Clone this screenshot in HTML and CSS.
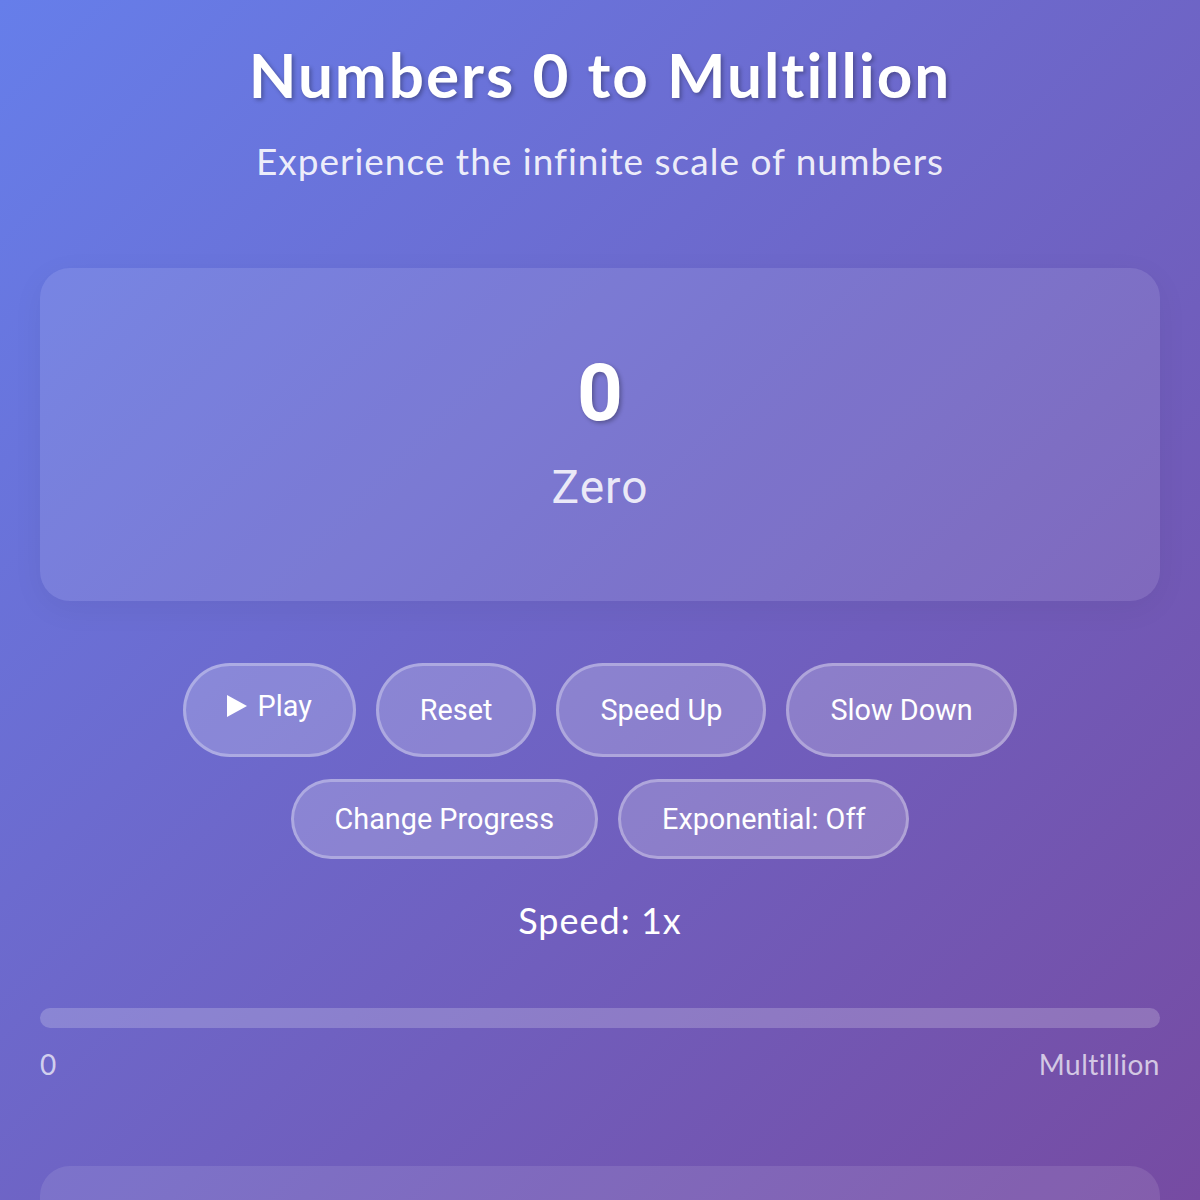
FILE: index.html
```html
<!DOCTYPE html>
<html lang="en">

<head>
    <meta charset="UTF-8">
    <meta name="viewport" content="width=device-width, initial-scale=1.0">
    <title>Numbers 0 to Multillion</title>
    <link rel="stylesheet" href="styles.css">
</head>

<body>
    <div class="container">
        <h1>Numbers 0 to Multillion</h1>
        <p class="subtitle">Experience the infinite scale of numbers</p>

        <div class="number-card">
            <div class="number" id="number">0</div>
            <div class="number-name" id="number-name">Zero</div>
        </div>

        <div class="controls">
            <div class="row">
                <button class="btn btn-play" id="play">
                    <svg class="play-icon" viewBox="0 0 20 22" width="20" height="22">
                        <path d="M0 0 L20 11 L0 22 Z" fill="#fff" />
                    </svg>
                    Play
                </button>
                <button class="btn" id="reset">Reset</button>
                <button class="btn" id="faster">Speed Up</button>
                <button class="btn" id="slower">Slow Down</button>
            </div>
            <div class="row">
                <button class="btn" id="progress-mode">Change Progress</button>
                <button class="btn" id="exponential">Exponential: Off</button>
            </div>
        </div>

        <div class="speed">Speed: <span id="speed">1x</span></div>

        <div class="progress">
            <div class="progress-fill" id="progress-fill"></div>
        </div>
        <div class="progress-labels">
            <span>0</span>
            <span>Multillion</span>
        </div>

        <div class="info-card"></div>
    </div>
</body>

</html>
```

FILE: styles.css
```css
html {
    background: linear-gradient(135deg, #667eea 0%, #764ba2 100%) fixed;
    min-height: 100%;
}

body {
    margin: 0;
    font-family: Lato, 'Open Sans', sans-serif;
    color: #fff;
}

.container {
    padding: 0 40px;
}

h1 {
    margin: 41px 0 0;
    font-size: 62px;
    line-height: 67px;
    font-weight: 700;
    text-align: center;
    letter-spacing: 2px;
    text-shadow: 2px 2px 4px rgba(0, 0, 0, 0.3);
}

.subtitle {
    margin: 34px 0 0;
    font-size: 37px;
    line-height: 38px;
    text-align: center;
    letter-spacing: 1px;
    color: rgba(255, 255, 255, 0.9);
}

.number-card {
    margin-top: 88px;
    height: 333px;
    box-sizing: border-box;
    padding: 77px 20px 0;
    border-radius: 30px;
    background: rgba(255, 255, 255, 0.1);
    box-shadow: 0 8px 32px rgba(0, 0, 0, 0.05);
    text-align: center;
}

.number {
    font-family: Roboto, sans-serif;
    font-weight: 700;
    font-size: 80px;
    line-height: 96px;
    text-shadow: 2px 2px 4px rgba(0, 0, 0, 0.3);
}

.number-name {
    margin-top: 20px;
    font-family: Roboto, sans-serif;
    font-size: 46px;
    line-height: 53px;
    letter-spacing: 1px;
    color: rgba(255, 255, 255, 0.85);
}

.controls {
    margin-top: 62px;
    display: flex;
    flex-direction: column;
    gap: 22px;
}

.row {
    display: flex;
    justify-content: center;
    gap: 20px;
}

.btn {
    font-family: Roboto, sans-serif;
    font-size: 28.8px;
    line-height: 34px;
    color: #fff;
    padding: 20px 41px;
    border: 3px solid rgba(255, 255, 255, 0.3);
    border-radius: 50px;
    background: rgba(255, 255, 255, 0.2);
    cursor: pointer;
}

.btn-play {
    padding: 23px 41px 31px;
}

.play-icon {
    vertical-align: -1px;
    margin-right: 3px;
}

.speed {
    margin-top: 41px;
    font-size: 36px;
    line-height: 41px;
    letter-spacing: 1px;
    text-align: center;
}

.progress {
    margin-top: 67px;
    height: 20px;
    border-radius: 10px;
    background: rgba(255, 255, 255, 0.2);
    overflow: hidden;
}

.progress-fill {
    width: 0;
    height: 100%;
    background: #fff;
}

.progress-labels {
    margin-top: 21px;
    display: flex;
    justify-content: space-between;
    font-size: 28px;
    line-height: 30px;
    letter-spacing: 0.5px;
    color: rgba(255, 255, 255, 0.7);
}

.info-card {
    margin-top: 87px;
    height: 300px;
    border-radius: 30px;
    background: rgba(255, 255, 255, 0.1);
}
```
